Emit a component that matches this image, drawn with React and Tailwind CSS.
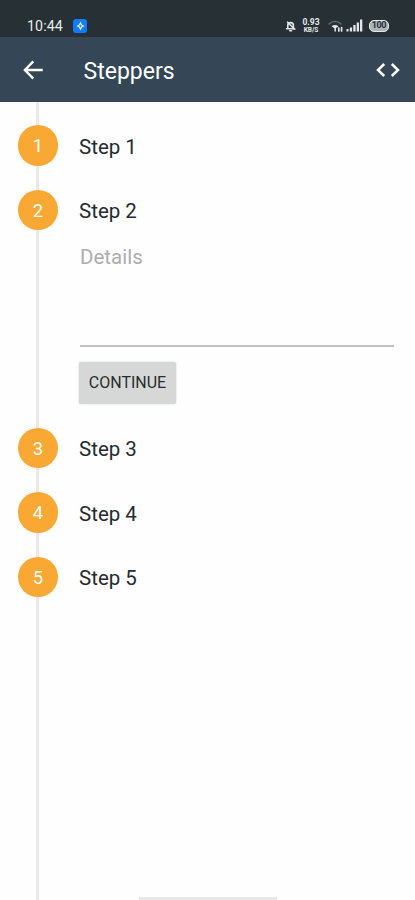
import React from 'react';

const STEPS = [
    { id: 1, label: 'Step 1' },
    { id: 2, label: 'Step 2', open: true },
    { id: 3, label: 'Step 3' },
    { id: 4, label: 'Step 4' },
    { id: 5, label: 'Step 5' },
];

const BellOffIcon = () => (
    <svg width="12" height="14" viewBox="0 0 12 14" fill="none" stroke="#e3e7e9" strokeWidth="1.6" strokeLinecap="round">
        <path d="M2.8 9.5V6.4a2.8 2.8 0 0 1 5.6 0V9.5M1.6 9.8h8M4.8 11.8h1.8" />
        <path d="M2.6 3.2l7 7" />
    </svg>
);

const WifiIcon = () => (
    <svg width="16" height="14" viewBox="0 0 16 14" fill="none" strokeLinecap="round">
        <path d="M1 5C4.5 1.5 9.5 1.5 13 5" stroke="#65727a" strokeWidth="1.3" />
        <path d="M3.5 7.3c2-1.7 5-1.7 7 0L7.2 9.8z" fill="#e3e7e9" />
        <path d="M10.8 9v3M13.6 8.5V12" stroke="#e3e7e9" strokeWidth="1.7" />
        <path d="M7.2 8v4" stroke="#e3e7e9" strokeWidth="1.5" />
    </svg>
);

const SignalIcon = () => (
    <svg width="17" height="13" viewBox="0 0 17 13" fill="#e3e7e9">
        <rect x="0.5" y="10" width="2" height="2.5" />
        <rect x="3.8" y="8.5" width="2.3" height="4" />
        <rect x="7.3" y="6" width="2.3" height="6.5" />
        <rect x="10.7" y="3.5" width="2.3" height="9" />
        <rect x="14" y="0.5" width="2.3" height="12" />
    </svg>
);

const StatusBar = () => (
    <div className="flex h-[37px] shrink-0 items-center bg-[#263035] pl-[27px] pr-[26px] pt-[14px] text-[#e8ecee]">
        <span className="w-[46px] text-[14.2px] leading-[16px] tracking-[0.1px]">10:44</span>
        <span className="flex h-[14px] w-[14px] items-center justify-center rounded-[3px] bg-[#147df5]">
            <svg width="9" height="10" viewBox="0 0 9 10" fill="#d9ebff">
                <path d="M4.5 0.5L6 3.5 8.5 5 6 6.5 4.5 9.5 3 6.5 0.5 5 3 3.5z" />
                <path d="M4.5 3.6v2.8M3.2 5h2.6" stroke="#147df5" strokeWidth="0.8" />
            </svg>
        </span>
        <div className="ml-auto flex items-center">
            <BellOffIcon />
            <div className="ml-[4px] flex w-[20px] flex-col items-center font-bold">
                <span className="text-[8.5px] leading-[9px]">0.93</span>
                <span className="text-[6.5px] leading-[6.5px]">KB/S</span>
            </div>
            <div className="ml-[7px]">
                <WifiIcon />
            </div>
            <div className="ml-[2px]">
                <SignalIcon />
            </div>
            <span className="ml-[6px] flex h-[12px] w-[20px] items-center justify-center rounded-[5px] border border-[#e3e7e9] bg-[#aeb5b8] text-[9px] font-bold leading-none tracking-[-0.4px] text-[#263035]">
                100
            </span>
        </div>
    </div>
);

const AppBar = () => (
    <div className="flex h-[64.5px] shrink-0 items-center bg-[#354757] pl-[23px] pr-[15px] pt-[1.5px] text-white">
        <svg width="20" height="20" viewBox="0 0 20 20" fill="none" stroke="currentColor" strokeWidth="2.4">
            <path d="M10.3 1.4L1.9 10l8.4 8.6M2 10h17.7" />
        </svg>
        <h1 className="ml-[40.5px] pt-[3px] text-[23px] leading-[30px] font-normal">Steppers</h1>
        <svg className="ml-auto" width="24" height="14" viewBox="0 0 24 14" fill="none" stroke="currentColor" strokeWidth="2.5">
            <path d="M8.2 1L2 7l6.2 6M15.8 1L22 7l-6.2 6" />
        </svg>
    </div>
);

const StepRow = ({ step, last }) => (
    <div className={`flex pl-[18px] pr-[21px] ${last ? 'flex-1' : ''}`}>
        {/* Rail with the numbered marker */}
        <div className="flex w-[40px] flex-col items-center">
            <div className="mr-px h-[12px] w-[3px] bg-[#e9e9e9]" />
            <div className="flex h-[40.5px] w-[40.5px] shrink-0 items-center justify-center rounded-full bg-[#f9a833] pt-[2px] text-[18.5px] leading-none text-white">
                {step.id}
            </div>
            <div className="mr-px w-[3px] flex-1 bg-[#e9e9e9]" />
        </div>

        <div className="ml-[21px] min-w-0 flex-1">
            <p className="h-[64.6px] pt-[18.6px] text-[20.5px] leading-[30px] text-[#252b30]">{step.label}</p>
            {step.open && (
                <div className="h-[173.4px]">
                    <textarea
                        className="ml-px block h-[104.5px] w-[314px] resize-none border-b-2 border-[#c1c1c1] text-[20.5px] leading-[30px] placeholder:text-[#adadad] placeholder:opacity-100 outline-none"
                        placeholder="Details"
                    />
                    <button className="mt-[15.5px] h-[42px] w-[97px] rounded-[2px] bg-[#d6d8d8] text-[16px] text-[#282c2e] shadow-[0_0_2px_rgba(0,0,0,0.2)]">
                        CONTINUE
                    </button>
                </div>
            )}
        </div>
    </div>
);

const App = () => {
    return (
        <div className="flex h-[900px] w-full flex-col overflow-hidden bg-[#fefefe] font-['Roboto',sans-serif]">
            <StatusBar />
            <AppBar />
            <div className="flex min-h-0 flex-1 flex-col">
                <div className="ml-[36px] h-[11.5px] w-[3px] shrink-0 bg-[#e9e9e9]" />
                {STEPS.map((step, i) => (
                    <StepRow key={step.id} step={step} last={i === STEPS.length - 1} />
                ))}
            </div>
            {/* Gesture handle */}
            <div className="absolute top-[897px] left-[139px] h-[3px] w-[138px] bg-[#e7e7e7]" />
        </div>
    );
};

export default App;
